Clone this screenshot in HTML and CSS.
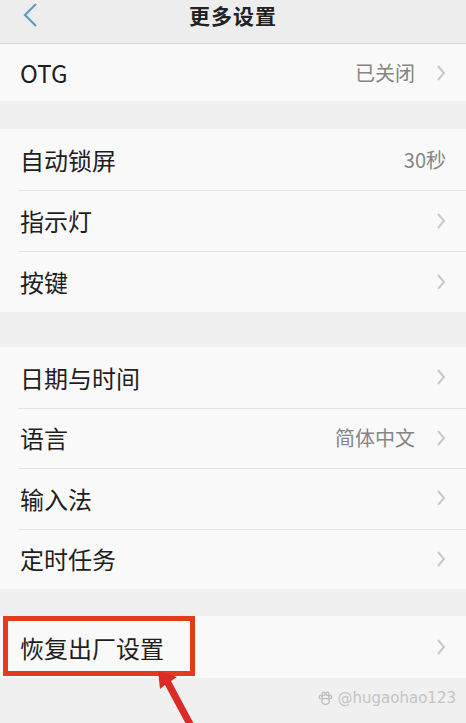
FILE: index.html
```html
<!DOCTYPE html>
<html lang="zh-CN">
<head>
    <meta charset="UTF-8">
    <meta name="viewport" content="width=device-width, initial-scale=1.0">
    <title>更多设置</title>
    <link rel="stylesheet" href="styles.css">
</head>
<body>
    <div class="screen">
        <div class="topbar">
            <svg class="back" width="16" height="26" viewBox="0 0 16 26">
                <polyline points="13,2 2,13 13,24" fill="none" stroke="#5b9fc6" stroke-width="2.2"/>
            </svg>
            <h1>更多设置</h1>
        </div>

        <div class="group group-first">
            <div class="row row-otg">
                <span class="label">OTG</span>
                <span class="value">已关闭</span>
                <svg class="chev" width="10" height="18" viewBox="0 0 10 18"><polyline points="2,2 8,9 2,16" fill="none" stroke="#c9c9c9" stroke-width="2"/></svg>
            </div>
        </div>

        <div class="group group-two">
            <div class="row">
                <span class="label">自动锁屏</span>
                <span class="value value-end">30秒</span>
            </div>
            <div class="row">
                <span class="label">指示灯</span>
                <svg class="chev" width="10" height="18" viewBox="0 0 10 18"><polyline points="2,2 8,9 2,16" fill="none" stroke="#c9c9c9" stroke-width="2"/></svg>
            </div>
            <div class="row">
                <span class="label">按键</span>
                <svg class="chev" width="10" height="18" viewBox="0 0 10 18"><polyline points="2,2 8,9 2,16" fill="none" stroke="#c9c9c9" stroke-width="2"/></svg>
            </div>
        </div>

        <div class="group group-three">
            <div class="row">
                <span class="label">日期与时间</span>
                <svg class="chev" width="10" height="18" viewBox="0 0 10 18"><polyline points="2,2 8,9 2,16" fill="none" stroke="#c9c9c9" stroke-width="2"/></svg>
            </div>
            <div class="row">
                <span class="label">语言</span>
                <span class="value">简体中文</span>
                <svg class="chev" width="10" height="18" viewBox="0 0 10 18"><polyline points="2,2 8,9 2,16" fill="none" stroke="#c9c9c9" stroke-width="2"/></svg>
            </div>
            <div class="row">
                <span class="label">输入法</span>
                <svg class="chev" width="10" height="18" viewBox="0 0 10 18"><polyline points="2,2 8,9 2,16" fill="none" stroke="#c9c9c9" stroke-width="2"/></svg>
            </div>
            <div class="row">
                <span class="label">定时任务</span>
                <svg class="chev" width="10" height="18" viewBox="0 0 10 18"><polyline points="2,2 8,9 2,16" fill="none" stroke="#c9c9c9" stroke-width="2"/></svg>
            </div>
        </div>

        <div class="group group-last">
            <div class="row row-reset">
                <span class="label">恢复出厂设置</span>
                <svg class="chev" width="10" height="18" viewBox="0 0 10 18"><polyline points="2,2 8,9 2,16" fill="none" stroke="#c9c9c9" stroke-width="2"/></svg>
                <!-- красная рамка-пометка поверх пункта -->
                <div class="mark-box"></div>
            </div>
        </div>

        <div class="footer">
            <svg class="paw" width="15" height="15" viewBox="0 0 16 16">
                <g fill="none" stroke="#bdbdbd" stroke-width="1.4">
                    <ellipse cx="8" cy="11" rx="4" ry="3.2"/>
                    <circle cx="3" cy="6.5" r="1.7"/>
                    <circle cx="6" cy="3" r="1.7"/>
                    <circle cx="10" cy="3" r="1.7"/>
                    <circle cx="13" cy="6.5" r="1.7"/>
                </g>
            </svg>
            <span class="watermark">@hugaohao123</span>
        </div>

        <svg class="arrow" width="60" height="60" viewBox="0 0 60 60">
            <polygon points="3,3 22,9 16,13 40,58 32,58 10,17 5,21" fill="#dc2a26"/>
        </svg>
    </div>
</body>
</html>
```

FILE: styles.css
```css
* {
    margin: 0;
    padding: 0;
    box-sizing: border-box;
}

body {
    font-family: "Noto Sans CJK SC", "Noto Sans", sans-serif;
    background: #f0f0f0;
    width: 466px;
    height: 723px;
    overflow: hidden;
}

.screen {
    position: relative;
    width: 466px;
    height: 723px;
    background: #f0f0f0;
}

.topbar {
    height: 44px;
    background: #ededed;
    border-bottom: 1px solid #d8d8d8;
    display: flex;
    align-items: flex-start;
    justify-content: center;
    padding-top: 2px;
    position: relative;
}

.topbar h1 {
    font-size: 21px;
    line-height: 26px;
    font-weight: 700;
    color: #222;
    letter-spacing: 1px;
}

.back {
    position: absolute;
    left: 23px;
    top: 2px;
}

.group {
    background: #f9f9f9;
}

.group-first {
    margin-bottom: 28px;
}

.group-two {
    margin-bottom: 35px;
}

.group-three {
    margin-bottom: 27px;
}

.row {
    height: 61px;
    display: flex;
    align-items: center;
    padding: 0 20px;
    position: relative;
}

.group-three .row {
    height: 60.5px;
}

.row + .row::before {
    content: "";
    position: absolute;
    top: 0;
    left: 18px;
    right: 0;
    height: 1px;
    background: #e3e3e3;
}

.row-otg {
    height: 57px;
}

.row-reset {
    height: 62px;
}

.label {
    font-size: 24px;
    color: #1e1e1e;
    flex: 1;
}

.value {
    font-size: 20px;
    color: #858585;
    margin-right: 21px;
}

.value-end {
    margin-right: 0;
}

.chev {
    flex-shrink: 0;
}

.mark-box {
    position: absolute;
    left: 3px;
    top: 0;
    width: 192px;
    height: 60px;
    border: 5px solid #e63a1f;
}

.footer {
    height: 44px;
    display: flex;
    justify-content: flex-end;
    align-items: center;
    gap: 5px;
    padding-right: 10px;
}

.paw {
    margin-top: -4px;
}

.watermark {
    font-family: "DejaVu Sans", sans-serif;
    font-size: 15px;
    color: #c4c4c4;
    margin-top: -4px;
}

.arrow {
    position: absolute;
    left: 155px;
    top: 668px;
}
```
